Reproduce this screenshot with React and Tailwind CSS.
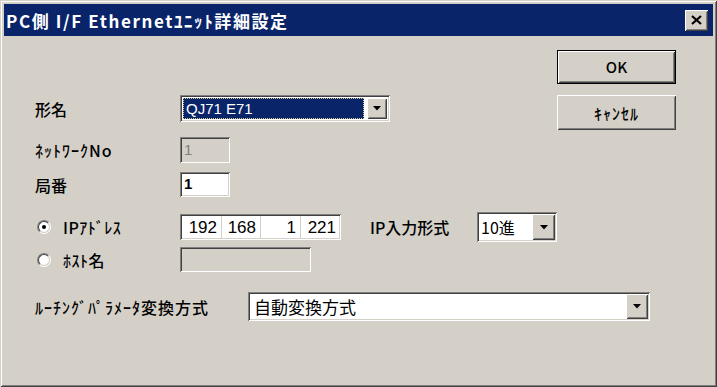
import React from "react";

// classic 3D edges
const sunken =
  "shadow-[inset_1px_1px_0_#808080,inset_-1px_-1px_0_#ffffff,inset_2px_2px_0_#404040,inset_-2px_-2px_0_#d4d0c8]";
const raised =
  "shadow-[inset_1px_1px_0_#ffffff,inset_-1px_-1px_0_#404040,inset_2px_2px_0_#d4d0c8,inset_-2px_-2px_0_#808080]";

const Arrow = () => (
  <svg width="8" height="5" viewBox="0 0 8 5">
    <path d="M0 0h8L4 4.5z" fill="#000" />
  </svg>
);

const DropButton = ({ className = "" }) => (
  <div className={`flex shrink-0 items-center justify-center bg-[#d4d0c8] ${raised} ${className}`}>
    <Arrow />
  </div>
);

const Label = ({ className = "", children }) => (
  <span className={`shrink-0 text-[16px] leading-none font-medium text-black ${className}`}>
    {children}
  </span>
);

const Radio = ({ checked }) => (
  <span className="flex h-[14px] w-[14px] shrink-0 rounded-full border border-t-[#808080] border-l-[#808080] border-r-white border-b-white">
    <span className="flex flex-1 items-center justify-center rounded-full border border-t-[#404040] border-l-[#404040] border-r-[#d4d0c8] border-b-[#d4d0c8] bg-white">
      {checked && <span className="h-[4px] w-[4px] rounded-full bg-black" />}
    </span>
  </span>
);

const App = () => {
  return (
    <div className="flex h-[387px] w-[717px] flex-col bg-[#d4d0c8] p-[4px] font-['Noto_Sans_CJK_JP',sans-serif] shadow-[inset_1px_1px_0_#d4d0c8,inset_-1px_-1px_0_#404040,inset_2px_2px_0_#ffffff,inset_-2px_-2px_0_#808080]">
      {/* Title bar */}
      <div className="flex h-[32px] shrink-0 items-center justify-between bg-[#0a246a] pl-[2px] pr-[5px]">
        <span className="text-[17px] leading-none font-bold tracking-[1.6px] text-white">
          PC側 I/F Ethernetﾕﾆｯﾄ詳細設定
        </span>
        <div className={`flex h-[21px] w-[23px] items-center justify-center bg-[#d4d0c8] ${raised}`}>
          <svg width="11" height="10" viewBox="0 0 11 10">
            <path d="M1 1l9 8M10 1l-9 8" stroke="#000" strokeWidth="2.2" />
          </svg>
        </div>
      </div>

      {/* Body */}
      <div className="flex flex-1 flex-col">
        <div className="flex">
          {/* Form */}
          <div className="flex flex-1 flex-col pl-[31px]">
            <div className="mt-[59px] flex h-[27px] items-center">
              <Label className="w-[145px]">形名</Label>
              <div className={`flex h-full w-[210px] bg-white p-[3px] ${sunken}`}>
                <div className="flex flex-1 items-center border border-dotted border-[#d8c890] bg-[#0a246a] pl-[2px] font-['Liberation_Sans',sans-serif] text-[15px] leading-none text-white">
                  QJ71 E71
                </div>
                <DropButton className="ml-[3px] w-[20px]" />
              </div>
            </div>

            <div className="mt-[15px] flex h-[26px] items-center">
              <Label className="w-[145px] text-[15px] tracking-[1px]">ﾈｯﾄﾜｰｸNo</Label>
              <div className={`flex h-full w-[50px] items-center bg-[#d4d0c8] pl-[4px] font-['Liberation_Sans',sans-serif] text-[15px] text-[#808080] ${sunken}`}>
                1
              </div>
            </div>

            <div className="mt-[9px] flex h-[25px] items-center">
              <Label className="w-[145px]">局番</Label>
              <div className={`flex h-full w-[50px] items-center bg-white pl-[4px] font-['Liberation_Sans',sans-serif] text-[15px] font-bold ${sunken}`}>
                1
              </div>
            </div>

            <div className="mt-[15px] flex h-[30px] items-center">
              <div className="flex w-[145px] shrink-0 items-center pl-[2px]">
                <Radio checked />
                <Label className="ml-[12px] tracking-[0.5px]">IPｱﾄﾞﾚｽ</Label>
              </div>
              <div className={`flex h-[26px] w-[161px] shrink-0 bg-white p-[2px] font-['Liberation_Sans',sans-serif] text-[17px] leading-none ${sunken}`}>
                <span className="flex w-[40px] items-center justify-end border-r border-[#d4d0c8] pr-[4px]">192</span>
                <span className="flex w-[39px] items-center justify-end border-r border-[#d4d0c8] pr-[4px]">168</span>
                <span className="flex w-[40px] items-center justify-end border-r border-[#d4d0c8] pr-[4px]">1</span>
                <span className="flex flex-1 items-center justify-end pr-[3px]">221</span>
              </div>
              <Label className="ml-[29px] w-[107px]">IP入力形式</Label>
              <div className={`flex h-[30px] w-[80px] shrink-0 bg-white p-[2px] ${sunken}`}>
                <span className="flex flex-1 items-center pl-[2px] text-[16px] leading-none">10進</span>
                <DropButton className="w-[23px]" />
              </div>
            </div>

            <div className="mt-[5px] flex h-[25px] items-center">
              <div className="flex w-[145px] shrink-0 items-center pl-[2px]">
                <Radio />
                <Label className="ml-[12px] tracking-[0.5px]">ﾎｽﾄ名</Label>
              </div>
              <div className={`h-full w-[131px] bg-[#d4d0c8] ${sunken}`} />
            </div>
          </div>

          {/* Buttons */}
          <div className="mr-[38px] flex w-[119px] shrink-0 flex-col">
            <div className="mt-[14px] flex h-[34px] items-center justify-center border border-black">
              <div className={`flex h-full w-full items-center justify-center bg-[#d4d0c8] text-[15px] font-medium ${raised}`}>
                OK
              </div>
            </div>
            <div className={`mt-[11px] flex h-[35px] items-center justify-center bg-[#d4d0c8] text-[16px] font-medium tracking-[1px] ${raised}`}>
              ｷｬﾝｾﾙ
            </div>
          </div>
        </div>

        <div className="mt-[20px] flex h-[29px] items-center pl-[31px]">
          <Label className="w-[213px] tracking-[1px]">ﾙｰﾁﾝｸﾞﾊﾟﾗﾒｰﾀ変換方式</Label>
          <div className={`flex h-full w-[402px] bg-white p-[2px] ${sunken}`}>
            <span className="flex flex-1 items-center pl-[4px] text-[17px] leading-none">自動変換方式</span>
            <DropButton className="w-[22px]" />
          </div>
        </div>
      </div>
    </div>
  );
};

export default App;
